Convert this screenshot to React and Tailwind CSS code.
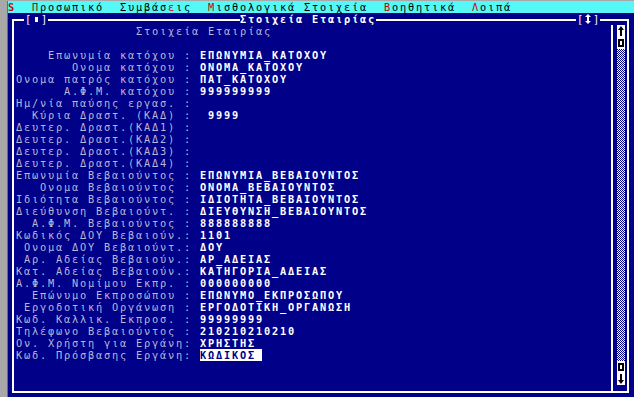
import React from "react";

const rows = [
  ["Επωνυμία κατόχου :", "ΕΠΩΝΥΜΙΑ_ΚΑΤΟΧΟΥ"],
  ["Ονομα κατόχου :", "ΟΝΟΜΑ_ΚΑΤΟΧΟΥ"],
  ["Ονομα πατρός κατόχου :", "ΠΑΤ_ΚΑΤΟΧΟΥ"],
  ["Α.Φ.Μ. κατόχου :", "999999999"],
  ["Ημ/νία παύσης εργασ. :", ""],
  ["Κύρια Δραστ. (ΚΑΔ) :", " 9999"],
  ["Δευτερ. Δραστ.(ΚΑΔ1) :", ""],
  ["Δευτερ. Δραστ.(ΚΑΔ2) :", ""],
  ["Δευτερ. Δραστ.(ΚΑΔ3) :", ""],
  ["Δευτερ. Δραστ.(ΚΑΔ4) :", ""],
  ["Επωνυμία Βεβαιούντος :", "ΕΠΩΝΥΜΙΑ_ΒΕΒΑΙΟΥΝΤΟΣ"],
  ["Ονομα Βεβαιούντος :", "ΟΝΟΜΑ_ΒΕΒΑΙΟΥΝΤΟΣ"],
  ["Ιδιότητα Βεβαιούντος :", "ΙΔΙΟΤΗΤΑ_ΒΕΒΑΙΟΥΝΤΟΣ"],
  ["Διεύθυνση Βεβαιούντ. :", "ΔΙΕΥΘΥΝΣΗ_ΒΕΒΑΙΟΥΝΤΟΣ"],
  ["Α.Φ.Μ. Βεβαιούντος :", "888888888"],
  ["Κωδικός ΔΟΥ Βεβαιούν.:", "1101"],
  ["Ονομα ΔΟΥ Βεβαιούντ.:", "ΔΟΥ"],
  ["Αρ. Αδείας Βεβαιούν.:", "ΑΡ_ΑΔΕΙΑΣ"],
  ["Κατ. Αδείας Βεβαιούν.:", "ΚΑΤΗΓΟΡΙΑ_ΑΔΕΙΑΣ"],
  ["Α.Φ.Μ. Νομίμου Εκπρ. :", "000000000"],
  ["Επώνυμο Εκπροσώπου :", "ΕΠΩΝΥΜΟ_ΕΚΠΡΟΣΩΠΟΥ"],
  ["Εργοδοτική Οργάνωση :", "ΕΡΓΟΔΟΤΙΚΗ_ΟΡΓΑΝΩΣΗ"],
  ["Κωδ. Καλλικ. Εκπροσ. :", "99999999"],
  ["Τηλέφωνο Βεβαιούντος :", "210210210210"],
  ["Ον. Χρήστη για Εργάνη:", "ΧΡΗΣΤΗΣ"],
  ["Κωδ. Πρόσβασης Εργάνη:", "ΚΩΔΙΚΟΣ", true],
];

function ArrowUp() {
  return (
    <svg width="8" height="12" viewBox="0 0 8 12">
      <rect x="3" y="4" width="2" height="7" fill="#000" />
      <path d="M4 1 L7 5 L1 5 Z" fill="#000" />
    </svg>
  );
}
function ArrowDown() {
  return (
    <svg width="8" height="12" viewBox="0 0 8 12">
      <rect x="3" y="1" width="2" height="7" fill="#000" />
      <path d="M4 11 L7 7 L1 7 Z" fill="#000" />
    </svg>
  );
}
function Thumb() {
  return (
    <svg width="8" height="12" viewBox="0 0 8 12">
      <rect x="1" y="2" width="6" height="8" fill="#000" />
      <rect x="3" y="4" width="2" height="4" fill="#fff" />
    </svg>
  );
}
function UpDown() {
  return (
    <svg width="8" height="12" viewBox="0 0 8 12">
      <rect x="3" y="3" width="2" height="6" fill="#fff" />
      <path d="M4 1 L7 4 L1 4 Z" fill="#fff" />
      <path d="M4 11 L7 8 L1 8 Z" fill="#fff" />
    </svg>
  );
}

export default function App() {
  return (
    <div
      className="w-[634px] h-[397px] overflow-hidden bg-[#a8a8a8] flex pt-[1px]"
      style={{ fontFamily: '"DejaVu Sans Mono", "Liberation Mono", monospace' }}
    >
      <div className="w-[8px] shrink-0 border-r border-[#6c6c6c]" />
      <div className="w-[640px] shrink-0 flex flex-col text-[10.3px] leading-[12px] tracking-[1.8px]">
        {/* menu bar */}
        <div className="h-[12px] bg-[#55f7f7] text-black whitespace-pre flex">
          <span className="text-[#d00000] font-bold">S</span>
          <span>{"  "}</span>
          <span className="text-[#a00000]">Π</span>
          <span>ροσωπικό{"  "}Συμβάσ</span>
          <span className="text-[#d00000]">ε</span>
          <span>ις{"  "}</span>
          <span className="text-[#d00000]">Μ</span>
          <span>ισθολογικά Στοιχεία{"  "}</span>
          <span className="text-[#d00000]">Β</span>
          <span>οηθητικά{"  "}</span>
          <span className="text-[#d00000]">Λ</span>
          <span>οιπά</span>
        </div>
        {/* window area */}
        <div className="flex-1 bg-[#000088] pl-[4px] flex flex-col">
          {/* frame top row */}
          <div className="h-[12px] w-[617px] flex text-white">
            <div className="w-[12px] mt-[6px] h-[6px] border-t-2 border-l-2 border-white" />
            <div className="w-[24px] flex items-center">
              <span className="w-[8px] text-center tracking-normal">[</span>
              <span className="w-[8px] flex justify-center">
                <span className="w-[3px] h-[5px] bg-white" />
              </span>
              <span className="w-[8px] text-center tracking-normal">]</span>
            </div>
            <div className="w-[192px] mt-[6px] h-[2px] bg-white" />
            <div className="w-[136px] whitespace-pre font-bold">Στοιχεία Εταιρίας</div>
            <div className="w-[200px] mt-[6px] h-[2px] bg-white" />
            <div className="w-[24px] flex items-center">
              <span className="w-[8px] text-center tracking-normal">[</span>
              <UpDown />
              <span className="w-[8px] text-center tracking-normal">]</span>
            </div>
            <div className="flex-1 mt-[6px] h-[6px] border-t-2 border-r-2 border-white" />
          </div>
          <div className="w-[617px] h-[368px] border-l-2 border-r-2 border-b-2 border-white flex">
            <div className="flex-1 flex flex-col pl-[2px] text-[#b8b8d8]">
              <div className="h-[12px] whitespace-pre">{"               Στοιχεία Εταιρίας"}</div>
              <div className="h-[12px]" />
              {rows.map(([label, value, hl], i) => (
                <div key={i} className="h-[12px] whitespace-pre flex">
                  <span>{label.padStart(22, " ") + " "}</span>
                  {hl ? (
                    <span className="bg-white text-[#000088] font-bold pr-[6px]">{value}</span>
                  ) : (
                    <span className="text-white font-bold">{value}</span>
                  )}
                </div>
              ))}
            </div>
            {/* scrollbar column */}
            <div className="w-[16px] border-l-2 border-white pl-[4px] flex flex-col">
              <div className="w-[8px] bg-white flex flex-col">
                <ArrowUp />
                <Thumb />
              </div>
              <div className="w-[8px] h-[312px] bg-[repeating-conic-gradient(#ffffff_0%_25%,#000088_0%_50%)] bg-[length:2px_2px]" />
              <div className="w-[8px] bg-white flex flex-col">
                <Thumb />
                <ArrowDown />
              </div>
            </div>
          </div>
        </div>
      </div>
    </div>
  );
}
